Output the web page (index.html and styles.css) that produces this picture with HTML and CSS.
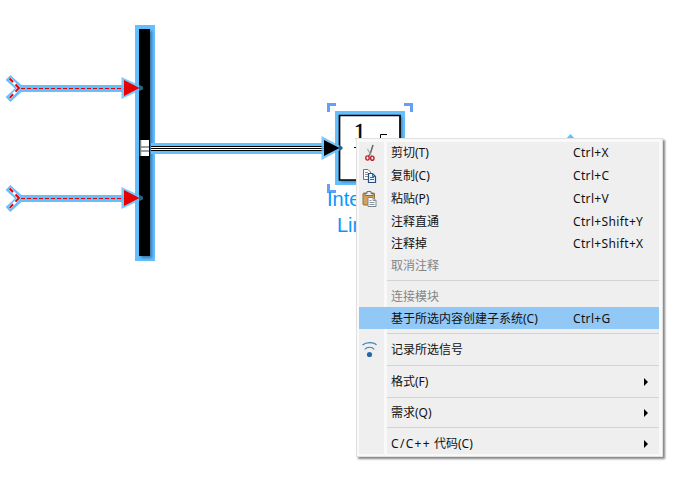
FILE: index.html
```html
<!DOCTYPE html>
<html lang="zh-CN">
<head>
<meta charset="utf-8">
<title>模型编辑器</title>
<link rel="stylesheet" href="styles.css">
</head>
<body>
<main class="canvas">
<svg class="diagram" width="680" height="482" viewBox="0 0 680 482">
  <defs>
    <filter id="soft" x="-50%" y="-10%" width="200%" height="120%"><feGaussianBlur stdDeviation="1.5"/></filter>
    <g id="signal">
      <path d="M8 -11L20 0L8 11" transform="translate(0 .5)" fill="none" stroke="#64bfff" stroke-width="7"/>
      <path d="M20 .5H123" stroke="#64bfff" stroke-width="7"/>
      <path d="M9.500 -9.500L19 0L9.500 10" fill="none" stroke="#fff" stroke-width="2.600"/>
      <path d="M9.500 -9.500L19 0L9.500 10" fill="none" stroke="#e60000" stroke-width="2" stroke-dasharray="5 3.500 10 3.500 5"/>
      <path d="M21 .5H124" stroke="#e60000" stroke-dasharray="4 2"/>
    </g>
    <g id="head">
      <path d="M121.500 -11V11L143 1V-1Z" fill="#64bfff" fill-opacity=".85"/>
      <path d="M124 -8V8L139.500 0Z" fill="#e60000"/>
      <path d="M139 -3L143 -1V1L139 3Z" fill="#286080"/>
    </g>
  </defs>
  <path d="M135 25H155V261H135Z" fill="#64bfff"/>
  <path d="M141 31H152V258H141Z" fill="#28587a" opacity=".7" filter="url(#soft)"/>
  <path d="M139 29H150V256H139Z" fill="#000"/>
  <use href="#signal" y="88"/><use href="#head" y="88"/>
  <use href="#signal" y="198"/><use href="#head" y="198"/>
  <path d="M151 148.500H322" stroke="#64bfff" stroke-width="11"/>
  <path d="M151 148.500H324" stroke="#000" stroke-width="5"/>
  <path d="M151 147.500H324M151 149.500H324" stroke="#fff"/>
  <path d="M140 140H149V156H140Z" fill="#fff"/>
  <path d="M140.500 140V156M140 147H149M140 151H149" stroke="#808080" stroke-width="1.500"/>
  <path d="M335 111H405V185H335Z" fill="#64bfff"/>
  <path d="M341 117H402V182H341Z" fill="#28587a" opacity=".6" filter="url(#soft)"/>
  <path d="M339.500 115.500H400V180H339.500Z" fill="#fff" stroke="#000" stroke-width="1.700"/>
  <path d="M321.500 136V160L342 149V147Z" fill="#64bfff" fill-opacity=".85"/>
  <path d="M324 140V156L339.500 148Z" fill="#000"/>
  <path d="M339 145L342.500 147V149L339 151Z" fill="#286080"/>
  <path d="M328.500 112V104.500H336M404 104.500H411.500V112M328.500 184V191.500H336" fill="none" stroke="#649ff4" stroke-width="3"/>
  <text class="formula" x="354" y="139">1</text>
  <path d="M354 147.500H358M380.500 138V134.500H387" fill="none" stroke="#000"/>
  <text class="block-name" x="327" y="206">Inte</text>
  <text class="block-name" x="337" y="232">Lim</text>
  <path d="M565 140L570.500 134L576 140Z" fill="#64bfff"/>
</svg>

<nav class="menu">
  <div class="item raised"><span class="icon"><svg width="16" height="18" viewBox="0 0 16 18"><path d="M11 1L8.500 9L6.500 12.500" stroke="#666" stroke-width="1.500" fill="none"/><path d="M5.500 5L8.500 10.500L10 12.500" stroke="#aaa" stroke-width="1.200" fill="none"/><g fill="none" stroke="#c4202c" stroke-width="1.400"><ellipse cx="5.500" cy="14" rx="1.700" ry="2.100"/><ellipse cx="10.300" cy="14.200" rx="1.700" ry="2.100"/></g></svg></span><span class="label">剪切(T)</span><span class="key">Ctrl+X</span></div>
  <div class="item raised"><span class="icon"><svg width="16" height="16" viewBox="0 0 16 16"><path d="M1.500 1.500H6L8.500 4V11.500H1.500Z" fill="#fff" stroke="#6c7480"/><path d="M3 4.500H6M3 6.500H7M3 8.500H7" stroke="#8a929c"/><path d="M6.500 5.500H10.500L13.500 8.500V14.500H6.500Z" fill="#eef5ff" stroke="#244e80" stroke-width="1.200"/><path d="M10.500 5.500V8.500H13.500M8 9.500H12M8 11.500H12" fill="none" stroke="#39679a"/></svg></span><span class="label">复制(C)</span><span class="key">Ctrl+C</span></div>
  <div class="item raised"><span class="icon"><svg width="16" height="17" viewBox="0 0 16 17"><rect x="1" y="3" width="11.500" height="12" rx="1" fill="#d2a15c" stroke="#946d3a"/><path d="M3 5.500V3.500H5V1.500H9V3.500H11V5.500Z" fill="#eee" stroke="#6c7074"/><path d="M6 7.500H11L14 10.500V16.500H6Z" fill="#fff" stroke="#7c858e"/><path d="M11 7.500V10.500H14M7.500 10.500H9.500M7.500 12.500H12.500M7.500 14.500H12.500" fill="none" stroke="#8a929a"/></svg></span><span class="label">粘贴(P)</span><span class="key">Ctrl+V</span></div>
  <div class="item compact"><span class="label">注释直通</span><span class="key">Ctrl+Shift+Y</span></div>
  <div class="item compact"><span class="label">注释掉</span><span class="key">Ctrl+Shift+X</span></div>
  <div class="item compact disabled"><span class="label">取消注释</span></div>
  <div class="rule wide"></div>
  <div class="item compact lowered disabled"><span class="label">连接模块</span></div>
  <div class="item compact lowered selected"><span class="label">基于所选内容创建子系统(C)</span><span class="key">Ctrl+G</span></div>
  <div class="rule wide low"></div>
  <div class="item tall"><span class="icon"><svg width="16" height="17" viewBox="0 0 16 17"><path d="M.5 4C4 .8 12 .8 14.500 4M2.700 8.500C5 5.500 10 5.500 12.300 8.500" fill="none" stroke="#3b80b8" stroke-width="1.200"/><circle cx="7.500" cy="13.500" r="2.600" fill="#2469aa"/></svg></span><span class="label">记录所选信号</span></div>
  <div class="rule"></div>
  <div class="item group lowered"><span class="label">格式(F)</span><span class="arrow"></span></div>
  <div class="rule low"></div>
  <div class="item group lowered"><span class="label">需求(Q)</span><span class="arrow"></span></div>
  <div class="rule"></div>
  <div class="item group last lowered"><span class="label"><span class="spaced">C/C++</span> 代码(C)</span><span class="arrow"></span></div>
</nav>
</main>
</body>
</html>
```
FILE: styles.css
```css
body { margin: 0; background: #fff; overflow: hidden; }
.canvas { position: relative; width: 680px; height: 482px; }
.diagram { display: block; }
.formula { font: 23px "Liberation Serif", serif; stroke: #000; stroke-width: .4px; }
.block-name { font: 20px "Liberation Sans", sans-serif; fill: #0a96ff; }
.menu {
  position: absolute;
  left: 356px;
  top: 138px;
  box-sizing: border-box;
  width: 307px;
  height: 319px;
  padding: 3px 3px 2px 2px;
  border: 1px solid #e0e0e0;
  background: linear-gradient(90deg, #efefef 25px, #f9f9f9 25px 28px, #efefef 28px) content-box, #f9f9f9;
  box-shadow: 2px 2px 2px 0 #858585;
  font: 12px/20px "Noto Sans", "Noto Sans CJK SC", sans-serif;
  color: #111;
}
.item {
  display: grid;
  grid-template-columns: 32px 182px 1fr 15px;
  align-items: center;
  box-sizing: border-box;
  height: 23px;
}
.raised { padding-bottom: 2px; }
.lowered { padding-top: 2px; }
.compact { height: 22px; }
.tall { height: 25px; }
.group { height: 24px; }
.last { height: 23px; }
.icon { grid-column: 1; display: flex; padding-left: 3px; }
.label { grid-column: 2; white-space: nowrap; }
.spaced { letter-spacing: 1.3px; }
.key { grid-column: 3; letter-spacing: .35px; white-space: nowrap; }
.arrow {
  grid-column: 4;
  width: 0;
  border: 4px solid transparent;
  border-left-color: #000;
  border-right: 0;
}
.disabled { color: #858585; }
.selected { background: #91c8f6; }
.rule {
  box-sizing: border-box;
  height: 7px;
  margin-left: 28px;
  padding-top: 3px;
}
.rule::before { content: ""; display: block; height: 1px; background: #d3d3d3; }
.wide { height: 8px; }
.low { padding-top: 4px; }
```
